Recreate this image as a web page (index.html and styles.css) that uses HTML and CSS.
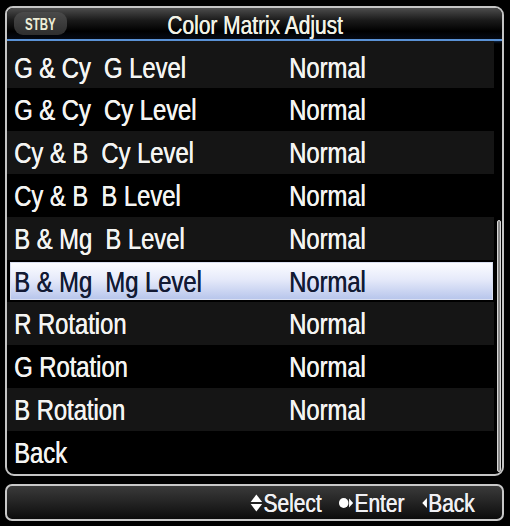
FILE: index.html
```html
<!DOCTYPE html>
<html>
<head>
<meta charset="utf-8">
<link rel="stylesheet" href="styles.css">
</head>
<body>
<div class="screen">
  <div class="panel">
    <div class="titlebar">
      <span class="badge"><span class="nar">STBY</span></span>
      <span class="title">Color Matrix Adjust</span>
    </div>
    <div class="blueline"></div>
    <div class="body">
      <div class="list">
        <div class="row gray first"><span class="label">G &amp; Cy&nbsp; G Level</span><span class="value">Normal</span></div>
        <div class="row"><span class="label">G &amp; Cy&nbsp; Cy Level</span><span class="value">Normal</span></div>
        <div class="row gray"><span class="label">Cy &amp; B&nbsp; Cy Level</span><span class="value">Normal</span></div>
        <div class="row"><span class="label">Cy &amp; B&nbsp; B Level</span><span class="value">Normal</span></div>
        <div class="row gray"><span class="label">B &amp; Mg&nbsp; B Level</span><span class="value">Normal</span></div>
        <div class="row selected"><span class="label">B &amp; Mg&nbsp; Mg Level</span><span class="value">Normal</span></div>
        <div class="row gray"><span class="label">R Rotation</span><span class="value">Normal</span></div>
        <div class="row"><span class="label">G Rotation</span><span class="value">Normal</span></div>
        <div class="row gray"><span class="label">B Rotation</span><span class="value">Normal</span></div>
        <div class="row"><span class="label">Back</span></div>
      </div>
      <div class="scroll"><div class="thumb"></div></div>
    </div>
  </div>
  <div class="footer">
    <div class="hints">
      <span class="hint">
        <svg class="ico" width="15" height="20" viewBox="0 0 15 20" preserveAspectRatio="none"><polygon points="7.5,1.5 14.5,9 0.5,9" fill="#fff"/><polygon points="0.5,11 14.5,11 7.5,18.5" fill="#fff"/></svg>Select
      </span>
      <span class="hint">
        <svg class="ico" width="18" height="20" viewBox="0 0 18 20"><ellipse cx="6" cy="10" rx="5.8" ry="5" fill="#fff"/><polygon points="12.5,5.5 17.5,10 12.5,14.5" fill="#fff"/></svg>Enter
      </span>
      <span class="hint">
        <svg class="ico" width="7" height="20" viewBox="0 0 7 20"><polygon points="6.5,5 6.5,15 0.8,10" fill="#fff"/></svg>Back
      </span>
    </div>
  </div>
</div>
</body>
</html>
```
FILE: styles.css
```css
html, body {
  margin: 0;
  padding: 0;
  background: #000;
}
body {
  width: 510px;
  height: 526px;
  overflow: hidden;
  font-family: "Liberation Sans", Arial, sans-serif;
  color: #f4f4f2;
}
.screen {
  padding: 6px 6px 0 5px;
  display: flex;
  flex-direction: column;
}
.panel {
  height: 466px;
  border: 2px solid #c4c4c4;
  border-radius: 8px 9px 9px 9px;
  overflow: hidden;
  display: flex;
  flex-direction: column;
  background: #000;
}
.titlebar {
  height: 31px;
  flex: none;
  position: relative;
  display: flex;
  align-items: center;
  justify-content: center;
  background: linear-gradient(#4c4c4c 0%, #1a1a1a 40%, #000 75%, #050a14 100%);
}
.badge {
  position: absolute;
  left: 7px;
  top: 4px;
  width: 53px;
  height: 23px;
  border-radius: 9px;
  background: linear-gradient(#4a4a4a, #2e2e2e);
  color: #eeeed8;
  font-size: 16px;
  font-weight: bold;
  line-height: 23px;
  display: flex;
  justify-content: center;
  align-items: center;
}
.nar {
  display: inline-block;
  transform: scaleX(0.72);
  padding-top: 1px;
}
.title {
  display: inline-block;
  font-size: 25.5px;
  color: #f2f2e6;
  padding-top: 3px;
  padding-left: 0;
  transform: scaleX(0.82);
  text-shadow: 0.4px 0 0 currentColor;
}
.blueline {
  height: 2px;
  flex: none;
  background: #5a92d6;
  box-shadow: 0 0 3px #2a5ca0;
}
.body {
  flex: 1;
  display: flex;
}
.list {
  flex: 1;
  display: flex;
  flex-direction: column;
}
.row {
  height: 42.9px;
  flex: none;
  display: flex;
  align-items: center;
  font-size: 29px;
  box-sizing: border-box;
  padding-left: 7px;
  padding-top: 2px;
  text-shadow: 0.5px 0 0 currentColor;
}
.row.first {
  height: 47px;
  padding-top: 7px;
}
.row.gray {
  background: #151515;
}
.row.selected {
  margin: 2px 1px 2px 3px;
  height: 38.9px;
  padding-left: 3px;
  background: linear-gradient(#fbfcff 0%, #e6eafa 45%, #b8c6ec 100%);
  border: 1px solid #d8def0;
  color: #121a34;
}
.label {
  display: inline-block;
  width: 275px;
  flex: none;
  white-space: nowrap;
  transform: scaleX(0.82);
  transform-origin: 0 50%;
}
.value {
  display: inline-block;
  white-space: nowrap;
  transform: scaleX(0.82);
  transform-origin: 0 50%;
}
.scroll {
  width: 8px;
  flex: none;
  display: flex;
  flex-direction: column;
  align-items: center;
}
.thumb {
  margin-top: 179px;
  width: 2px;
  height: 250px;
  border: 1px solid #d6d6d6;
  border-radius: 2px;
  background: #8a8a8a;
  margin-left: 1px;
}
.footer {
  margin-top: 8px;
  height: 33px;
  border: 2px solid #c8c8c8;
  border-radius: 7px;
  background: linear-gradient(#3a3a3a 0%, #262626 45%, #0c0c0c 100%);
  display: flex;
  justify-content: flex-end;
  align-items: center;
  padding-right: 27px;
  font-size: 25.5px;
  color: #f0f0f4;
}
.hints {
  display: flex;
  align-items: center;
  gap: 21px;
  transform: scaleX(0.82);
  transform-origin: 100% 50%;
  text-shadow: 0.5px 0 0 currentColor;
}
.hint {
  display: flex;
  align-items: center;
  white-space: nowrap;
  padding-top: 1px;
}
.ico {
  margin-right: 1px;
}
```
